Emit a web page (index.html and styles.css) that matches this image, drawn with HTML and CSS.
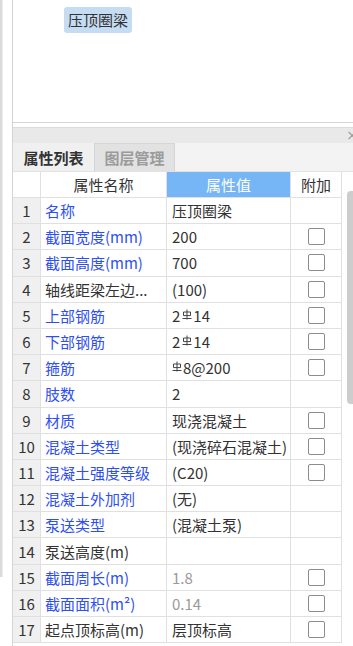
FILE: index.html
```html
<!DOCTYPE html>
<html lang="zh">
<head>
<meta charset="utf-8">
<title>属性列表</title>
<link rel="stylesheet" href="styles.css">
</head>
<body>
<div class="app">
  <div class="gutter"><div class="gutter-line"></div></div>
  <div class="main">
    <div class="top-panel">
      <span class="tag">压顶圈梁</span>
    </div>
    <div class="bottom-panel">
      <div class="title-bar"><span class="close">×</span></div>
      <div class="tabs">
        <div class="tab active">属性列表</div>
        <div class="tab">图层管理</div>
      </div>
      <div class="table-wrap">
        <div class="grid">
          <div class="c hd num"></div>
          <div class="c hd">属性名称</div>
          <div class="c hd val-hd">属性值</div>
          <div class="c hd add">附加</div>

          <div class="c num">1</div><div class="c name blue">名称</div><div class="c val">压顶圈梁</div><div class="c add"></div>
          <div class="c num">2</div><div class="c name blue">截面宽度(mm)</div><div class="c val">200</div><div class="c add"><span class="cb"></span></div>
          <div class="c num">3</div><div class="c name blue">截面高度(mm)</div><div class="c val">700</div><div class="c add"><span class="cb"></span></div>
          <div class="c num">4</div><div class="c name">轴线距梁左边...</div><div class="c val">(100)</div><div class="c add"><span class="cb"></span></div>
          <div class="c num">5</div><div class="c name blue">上部钢筋</div><div class="c val">2<svg class="rebar" viewBox="0 0 10 11"><path d="M5 0.5V10.5M1.5 3h7v3.6h-7zM0.5 9.5h9" fill="none" stroke="#444" stroke-width="1"/></svg>14</div><div class="c add"><span class="cb"></span></div>
          <div class="c num">6</div><div class="c name blue">下部钢筋</div><div class="c val">2<svg class="rebar" viewBox="0 0 10 11"><path d="M5 0.5V10.5M1.5 3h7v3.6h-7zM0.5 9.5h9" fill="none" stroke="#444" stroke-width="1"/></svg>14</div><div class="c add"><span class="cb"></span></div>
          <div class="c num">7</div><div class="c name blue">箍筋</div><div class="c val"><svg class="rebar first" viewBox="0 0 10 11"><path d="M5 0.5V10.5M1.5 3h7v3.6h-7zM0.5 9.5h9" fill="none" stroke="#444" stroke-width="1"/></svg>8@200</div><div class="c add"><span class="cb"></span></div>
          <div class="c num">8</div><div class="c name blue">肢数</div><div class="c val">2</div><div class="c add"></div>
          <div class="c num">9</div><div class="c name blue">材质</div><div class="c val">现浇混凝土</div><div class="c add"><span class="cb"></span></div>
          <div class="c num">10</div><div class="c name blue">混凝土类型</div><div class="c val">(现浇碎石混凝土)</div><div class="c add"><span class="cb"></span></div>
          <div class="c num">11</div><div class="c name blue">混凝土强度等级</div><div class="c val">(C20)</div><div class="c add"><span class="cb"></span></div>
          <div class="c num">12</div><div class="c name blue">混凝土外加剂</div><div class="c val">(无)</div><div class="c add"></div>
          <div class="c num">13</div><div class="c name blue">泵送类型</div><div class="c val">(混凝土泵)</div><div class="c add"></div>
          <div class="c num">14</div><div class="c name">泵送高度(m)</div><div class="c val"></div><div class="c add"></div>
          <div class="c num">15</div><div class="c name blue">截面周长(m)</div><div class="c val gray">1.8</div><div class="c add"><span class="cb"></span></div>
          <div class="c num">16</div><div class="c name blue">截面面积(m²)</div><div class="c val gray">0.14</div><div class="c add"><span class="cb"></span></div>
          <div class="c num">17</div><div class="c name">起点顶标高(m)</div><div class="c val">层顶标高</div><div class="c add"><span class="cb"></span></div>
        </div>
        <div class="scroll"><div class="thumb"></div></div>
      </div>
    </div>
  </div>
</div>
</body>
</html>
```
FILE: styles.css
```css
* { box-sizing: border-box; }
html, body {
  margin: 0;
  padding: 0;
  width: 353px;
  height: 646px;
  overflow: hidden;
  background: #fff;
  font-family: "Noto Sans CJK SC", "Noto Sans", sans-serif;
  font-size: 15px;
  color: #333;
}
.app {
  display: flex;
  height: 646px;
}
.gutter {
  width: 12px;
  flex: none;
}
.gutter-line {
  width: 3px;
  height: 577px;
  background: #dadada;
  border-right: 1px solid #ececec;
}
.main {
  flex: 1;
  border-left: 1px solid #d4d4d4;
  display: flex;
  flex-direction: column;
  min-width: 0;
}
.top-panel {
  height: 123px;
  border-bottom: 1px solid #d4d4d4;
  padding: 7px 0 0 51px;
  flex: none;
}
.tag {
  display: inline-block;
  height: 26px;
  line-height: 26px;
  padding: 0 4px;
  background: #c6dcf3;
  border-radius: 3px;
  color: #333;
}
.bottom-panel {
  margin-top: 4px;
  flex: 1;
  display: flex;
  flex-direction: column;
  min-height: 0;
}
.title-bar {
  height: 16px;
  background: #e9e9e9;
  border-top: 1px solid #dcdcdc;
  display: flex;
  justify-content: flex-end;
  overflow: hidden;
}
.close {
  color: #9a9a9a;
  font-size: 14px;
  line-height: 14px;
  margin-right: -5px;
  font-family: "DejaVu Sans", sans-serif;
}
.tabs {
  height: 28px;
  background: #f3f3f3;
  display: flex;
  align-items: stretch;
}
.tab {
  width: 81px;
  display: flex;
  align-items: center;
  justify-content: center;
  color: #9b9b9b;
  background: #e2e2e2;
  border: 1px solid #d6d6d6;
  border-bottom: none;
  font-weight: bold;
}
.tab.active {
  width: 81px;
  background: #f0f0f0;
  color: #333;
  border: none;
}
.table-wrap {
  display: flex;
  flex: 1;
  min-height: 0;
  border-top: 1px solid #e2e2e2;
}
.grid {
  display: grid;
  grid-template-columns: 28px 126px 124px 51px;
  grid-template-rows: 26px;
  grid-auto-rows: 26.2px;
  flex: none;
}
.c {
  border-right: 1px solid #e0e0e0;
  border-bottom: 1px solid #e0e0e0;
  display: flex;
  align-items: center;
  white-space: nowrap;
  overflow: hidden;
  line-height: 1;
}
.hd {
  justify-content: center;
  background: #fff;
  color: #333;
}
.val-hd {
  background: #76b5f6;
  color: #fff;
}
.num {
  justify-content: center;
  background: #f0f0f0;
  color: #333;
}
.hd.num { background: #fff; }
.name { padding-left: 4px; color: #333; }
.name.blue { color: #2e4ff2; }
.val { padding-left: 5px; color: #333; }
.val.gray { color: #9a9a9a; }
.add { justify-content: center; }
.cb {
  width: 17px;
  height: 17px;
  border: 1px solid #8c8c8c;
  border-radius: 2px;
  background: #fff;
  margin-left: 1px;
}
.rebar {
  width: 10px;
  height: 11px;
  align-self: flex-start;
  margin: 6px 1px 0 2px;
}
.rebar.first { margin-left: 0; }
.scroll {
  flex: 1;
  background: #fff;
  padding: 19px 0 0 5px;
}
.thumb {
  height: 213px;
  background: #cdcdcd;
  border-radius: 4px 0 0 4px;
}
```
